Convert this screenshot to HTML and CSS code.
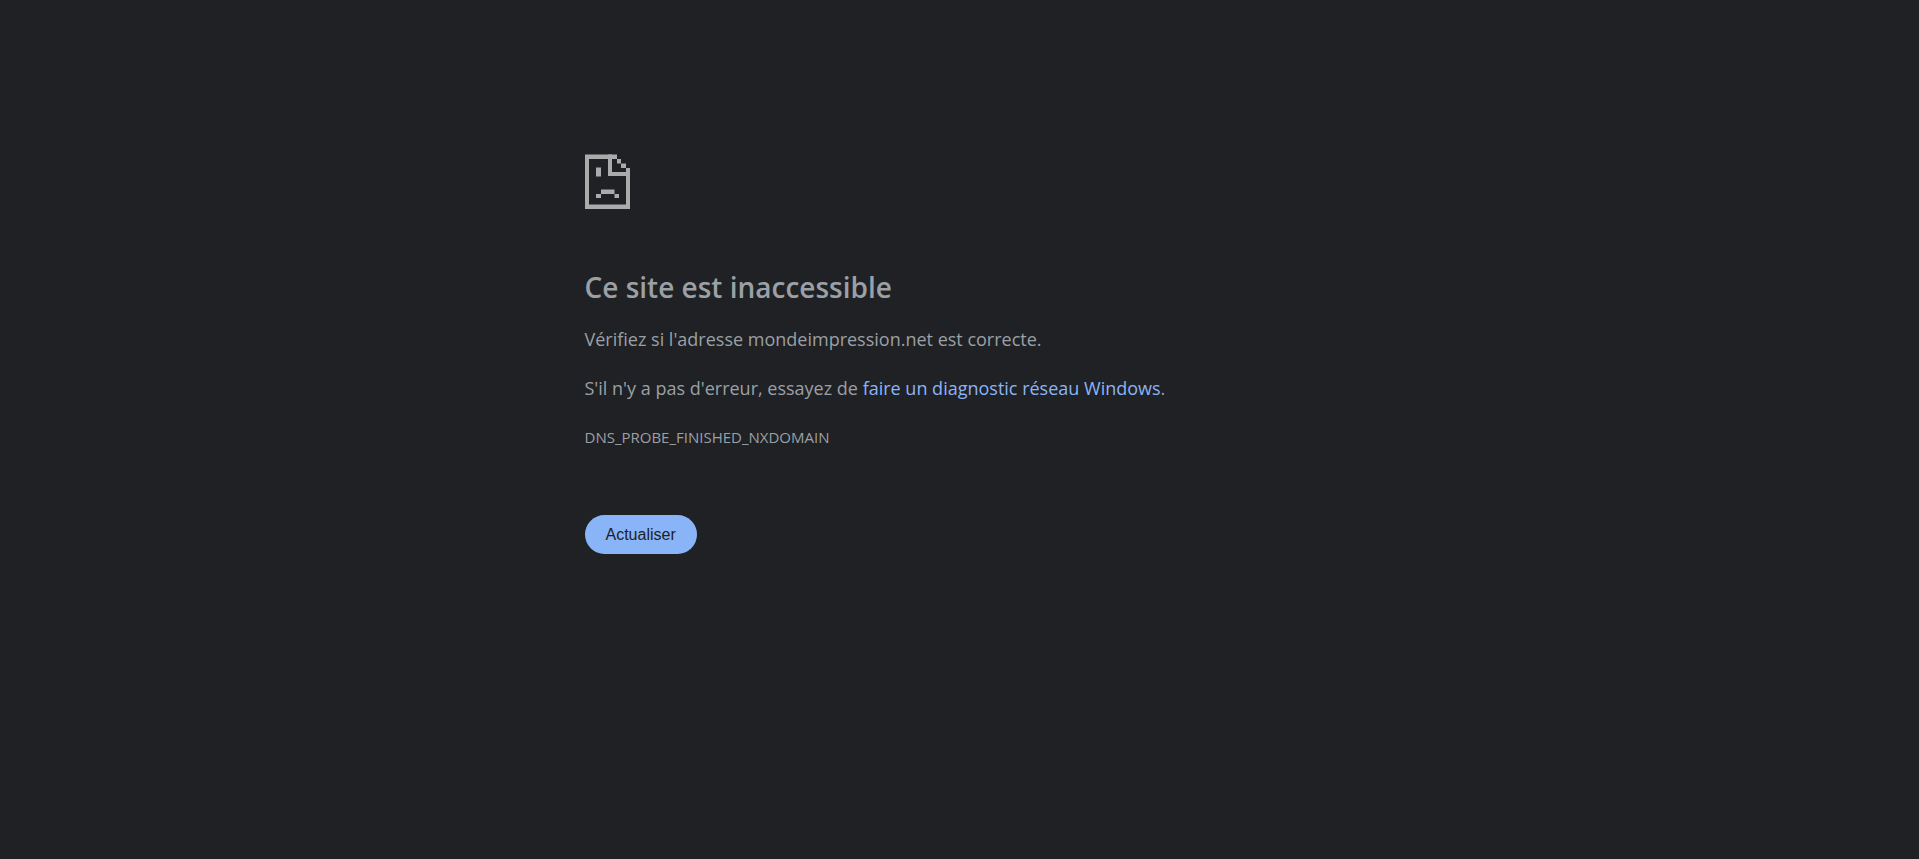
FILE: index.html
```html
<!DOCTYPE html>
<html lang="fr">
<head>
    <meta charset="UTF-8">
    <meta name="viewport" content="width=device-width, initial-scale=1.0">
    <title>mondeimpression.net</title>
    <link rel="stylesheet" href="styles.css">
</head>
<body>
    <main class="error-page">
        <svg class="icon" viewBox="0 0 90 110" aria-hidden="true">
            <!-- Page -->
            <path d="M0 1H64V10H8V101H82V28H90V110H0Z"/>
            <!-- Coin plié -->
            <path d="M46 1H54V36H90V44H46ZM64 10H72V19H64ZM72 19H82V28H72Z"/>
            <!-- Visage -->
            <path d="M22 27H32V45H22ZM32 71H59V80H32ZM22 80H32V88H22ZM59 80H68V88H59Z"/>
        </svg>
        <h1 class="title">Ce site est inaccessible</h1>
        <p class="message">Vérifiez si l'adresse mondeimpression.net est correcte.</p>
        <p class="message">S'il n'y a pas d'erreur, essayez de <a href="#" class="link">faire un diagnostic réseau Windows</a>.</p>
        <div class="error-code">DNS_PROBE_FINISHED_NXDOMAIN</div>
        <button type="button" class="reload-button">Actualiser</button>
    </main>
</body>
</html>
```

FILE: styles.css
```css
body {
    margin: 0;
    background-color: #202124;
    color: #9aa0a6;
    font-family: "Segoe UI", "Open Sans", "Noto Sans", sans-serif;
    font-size: 18px;
    line-height: 30px;
}
.error-page {
    box-sizing: border-box;
    max-width: 750px;
    margin: 0 auto;
    padding-top: 154px;
}
.icon {
    display: block;
    width: 45px;
    height: 55px;
    fill: #ababab;
}
.title {
    margin: 60px 0 19px;
    font-size: 28px;
    font-weight: 600;
    line-height: 36px;
}
.message {
    margin: 0 0 19px;
}
.link {
    color: #8ab4f8;
    text-decoration: none;
}
.link:hover {
    text-decoration: underline;
}
.error-code {
    font-size: 15px;
}
.reload-button {
    margin-top: 63px;
    padding: 0 21px;
    border: 0;
    border-radius: 20px;
    background-color: #8ab4f8;
    color: #202124;
    font-family: Arial, "Liberation Sans", sans-serif;
    font-size: 16px;
    line-height: 39px;
    cursor: pointer;
}
```
